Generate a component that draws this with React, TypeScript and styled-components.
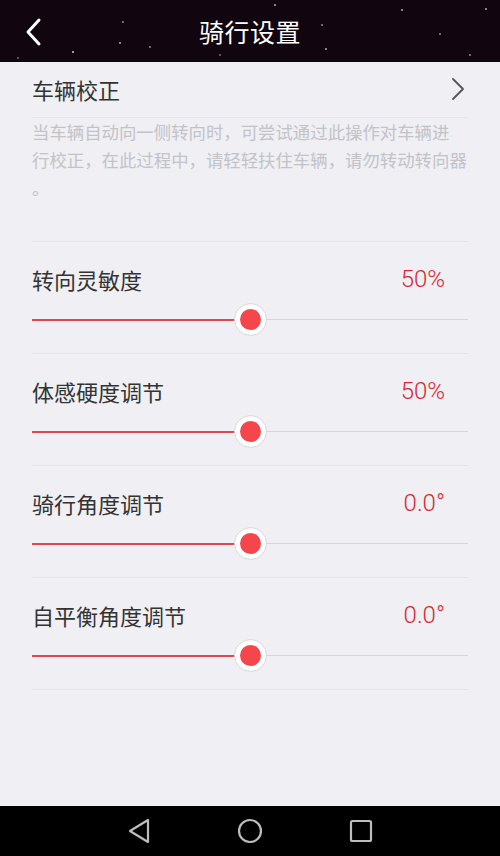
import React from "react";
import styled, { createGlobalStyle } from "styled-components";

const GlobalStyle = createGlobalStyle`
  html, body {
    margin: 0;
    padding: 0;
    background: #efeff4;
  }
  body {
    font-family: "Noto Sans CJK SC", "Noto Sans", Roboto, sans-serif;
  }
`;

interface Setting {
  label: string;
  value: string;
  percent: number;
}

const settings: Setting[] = [
  { label: "转向灵敏度", value: "50%", percent: 50 },
  { label: "体感硬度调节", value: "50%", percent: 50 },
  { label: "骑行角度调节", value: "0.0°", percent: 50 },
  { label: "自平衡角度调节", value: "0.0°", percent: 50 },
];

const descLines = [
  "当车辆自动向一侧转向时，可尝试通过此操作对车辆进",
  "行校正，在此过程中，请轻轻扶住车辆，请勿转动转向器",
  "。",
];

export default function App() {
  return (
    <Page>
      <GlobalStyle />
      <Header>
        <BackButton>
          <svg width="20" height="30" viewBox="0 0 20 30">
            <polyline points="15,3 4,15 15,27" fill="none" stroke="#fff" strokeWidth="3" strokeLinecap="round" strokeLinejoin="round" />
          </svg>
        </BackButton>
        <Title>骑行设置</Title>
      </Header>
      <Content>
        <CalibRow>
          <Label>车辆校正</Label>
          <svg width="16" height="24" viewBox="0 0 16 24">
            <polyline points="3,2 13,12 3,22" fill="none" stroke="#555" strokeWidth="1.8" strokeLinecap="round" strokeLinejoin="round" />
          </svg>
        </CalibRow>
        <Description>
          {descLines.map((l, i) => (
            <DescLine key={i}>{l}</DescLine>
          ))}
        </Description>
        {settings.map((s) => (
          <SettingRow key={s.label}>
            <SettingHead>
              <Label>{s.label}</Label>
              <Value>{s.value}</Value>
            </SettingHead>
            <Slider>
              <Track />
              <Fill style={{ width: `${s.percent}%` }} />
              <Thumb style={{ left: `${s.percent}%` }} />
            </Slider>
          </SettingRow>
        ))}
        <BottomLine />
      </Content>
      <NavBar>
        <svg width="26" height="28" viewBox="0 0 26 28">
          <polygon points="22,3 22,25 4,14" fill="none" stroke="#bdbdbd" strokeWidth="2.2" strokeLinejoin="round" />
        </svg>
        <svg width="28" height="28" viewBox="0 0 28 28">
          <circle cx="14" cy="14" r="11" fill="none" stroke="#bdbdbd" strokeWidth="2.2" />
        </svg>
        <svg width="26" height="26" viewBox="0 0 26 26">
          <rect x="3" y="3" width="20" height="20" rx="1.5" fill="none" stroke="#bdbdbd" strokeWidth="2.2" />
        </svg>
      </NavBar>
    </Page>
  );
}

const Page = styled.div`
  width: 500px;
  height: 856px;
  display: flex;
  flex-direction: column;
  background: #efeff4;
  overflow: hidden;
`;

const Header = styled.div`
  height: 62px;
  flex-shrink: 0;
  display: flex;
  align-items: center;
  justify-content: center;
  position: relative;
  background-color: #110510;
  background-image:
    radial-gradient(circle at 73px 52px, rgba(255,255,255,0.6) 0 1px, transparent 1.5px),
    radial-gradient(circle at 120px 43px, rgba(255,255,255,0.5) 0 1px, transparent 1.5px),
    radial-gradient(circle at 123px 22px, rgba(255,255,255,0.4) 0 1px, transparent 1.5px),
    radial-gradient(circle at 150px 47px, rgba(255,255,255,0.4) 0 1px, transparent 1.5px),
    radial-gradient(circle at 275px 5px, rgba(255,255,255,0.5) 0 1px, transparent 1.5px),
    radial-gradient(circle at 322px 25px, rgba(255,255,255,0.4) 0 1px, transparent 1.5px),
    radial-gradient(circle at 326px 49px, rgba(255,255,255,0.5) 0 1px, transparent 1.5px),
    radial-gradient(circle at 402px 10px, rgba(255,255,255,0.5) 0 1px, transparent 1.5px),
    radial-gradient(circle at 440px 34px, rgba(255,255,255,0.4) 0 1px, transparent 1.5px),
    radial-gradient(circle at 486px 9px, rgba(255,255,255,0.5) 0 1px, transparent 1.5px),
    radial-gradient(circle at 470px 55px, rgba(255,255,255,0.4) 0 1px, transparent 1.5px),
    radial-gradient(circle at 220px 55px, rgba(255,255,255,0.3) 0 1px, transparent 1.5px),
    radial-gradient(circle at 18px 58px, rgba(255,255,255,0.3) 0 1px, transparent 1.5px);
`;

const BackButton = styled.div`
  position: absolute;
  left: 24px;
  top: 17px;
  width: 20px;
  height: 30px;
  display: flex;
`;

const Title = styled.div`
  color: #fff;
  font-size: 25px;
  letter-spacing: 0.5px;
`;

const Content = styled.div`
  flex: 1;
  padding: 0 32px;
  display: flex;
  flex-direction: column;
`;

const CalibRow = styled.div`
  height: 56px;
  box-sizing: border-box;
  display: flex;
  align-items: center;
  justify-content: space-between;
  border-bottom: 1px solid #e6e6ea;
  padding: 0 2px 2px 0;
`;

const Label = styled.div`
  font-size: 22px;
  color: #333;
  line-height: 30px;
`;

const Description = styled.div`
  height: 123px;
  font-size: 17.4px;
  line-height: 28px;
  color: #c3c3c7;
`;

const DescLine = styled.div`
  white-space: nowrap;
`;

const SettingRow = styled.div`
  height: 112px;
  border-top: 1px solid #e4e4e8;
  display: flex;
  flex-direction: column;
  padding-top: 22px;
  box-sizing: border-box;
`;

const SettingHead = styled.div`
  display: flex;
  align-items: center;
  justify-content: space-between;
  padding-right: 23px;
`;

const Value = styled.div`
  font-family: Roboto, "Noto Sans", sans-serif;
  font-size: 24px;
  font-weight: 300;
  line-height: 30px;
  color: #d9282f;
`;

const Slider = styled.div`
  position: relative;
  height: 34px;
  margin-top: 9px;
`;

const Track = styled.div`
  position: absolute;
  left: 0;
  right: 0;
  top: 16px;
  height: 1px;
  background: #d6d6da;
`;

const Fill = styled.div`
  position: absolute;
  left: 0;
  top: 16px;
  height: 2px;
  background: #e0474c;
`;

const Thumb = styled.div`
  position: absolute;
  top: 0;
  width: 33px;
  height: 33px;
  margin-left: -16.5px;
  border-radius: 50%;
  background: #fff;
  border: 1px solid #d8d8dc;
  box-sizing: border-box;
  display: flex;
  align-items: center;
  justify-content: center;

  &::after {
    content: "";
    width: 21px;
    height: 21px;
    border-radius: 50%;
    background: #f5474b;
  }
`;

const BottomLine = styled.div`
  border-top: 1px solid #e4e4e8;
`;

const NavBar = styled.div`
  height: 50px;
  flex-shrink: 0;
  background: #000;
  display: flex;
  align-items: center;
  justify-content: center;
  gap: 84px;
`;
